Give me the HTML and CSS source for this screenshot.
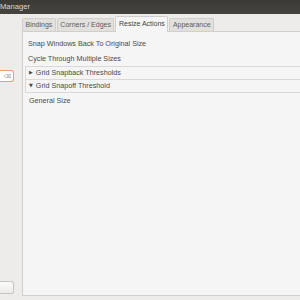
FILE: index.html
```html
<!DOCTYPE html>
<html lang="en">
  <head>
    <meta charset="UTF-8" />
    <title>Manager</title>
    <link rel="stylesheet" href="styles.css">
  </head>
  <body>
    <div class="titlebar">Manager</div>
    <div class="main">
      <div class="sidebar">
        <div class="search">
          <span class="clear-icon">&#x232B;</span>
        </div>
        <div class="side-button"></div>
      </div>
      <div class="notebook">
        <div class="tabs">
          <div class="tab">Bindings</div>
          <div class="tab">Corners / Edges</div>
          <div class="tab active">Resize Actions</div>
          <div class="tab">Appearance</div>
        </div>
        <div class="page">
          <div class="row">Snap Windows Back To Original Size</div>
          <div class="row">Cycle Through Multiple Sizes</div>
          <div class="expander">
            <span class="arrow">&#9654;</span>Grid Snapback Thresholds
          </div>
          <div class="expander open">
            <span class="arrow">&#9660;</span>Grid Snapoff Threshold
          </div>
          <div class="row sub">General Size</div>
        </div>
      </div>
    </div>
  </body>
</html>
```

FILE: styles.css
```css
body {
  margin: 0;
  width: 300px;
  height: 300px;
  overflow: hidden;
  background-color: #edecea;
  font-family: "Liberation Sans", Arial, sans-serif;
  color: #4a4a48;
}
.titlebar {
  height: 14px;
  line-height: 13px;
  background: linear-gradient(#3a3935, #46443f);
  color: #dcd9d2;
  font-size: 7.6px;
}
.main {
  display: flex;
  height: 286px;
}
.sidebar {
  width: 22px;
  display: flex;
  flex-direction: column;
  justify-content: space-between;
  padding-top: 56px;
  padding-bottom: 6px;
  box-sizing: border-box;
}
.search {
  width: 15px;
  height: 12px;
  margin-left: -1px;
  box-sizing: border-box;
  border: 1px solid #f09a6e;
  border-left: none;
  border-radius: 0 3px 3px 0;
  background-color: #fff;
  display: flex;
  align-items: center;
  justify-content: flex-end;
  padding-right: 2px;
}
.clear-icon {
  font-family: "DejaVu Sans", sans-serif;
  font-size: 5px;
  color: #777;
}
.side-button {
  width: 15px;
  height: 13px;
  margin-left: -1px;
  box-sizing: border-box;
  border: 1px solid #c8c5c0;
  border-left: none;
  border-radius: 0 3px 3px 0;
  background: linear-gradient(#fbfbfa, #ecebe9);
}
.notebook {
  flex: 1;
  display: flex;
  flex-direction: column;
  padding-top: 1px;
  padding-bottom: 4px;
}
.tabs {
  display: flex;
  align-items: flex-end;
  height: 16px;
}
.tab {
  height: 12px;
  line-height: 12px;
  padding: 0 2.5px;
  margin-right: 1px;
  font-size: 7px;
  color: #5c5b58;
  background-color: #e2e0dd;
  border: 1px solid #d2cfcb;
  border-bottom: none;
  border-radius: 2px 2px 0 0;
}
.tab.active {
  height: 15px;
  line-height: 14px;
  background-color: #f5f5f5;
  color: #3f3f3d;
  position: relative;
  top: 1px;
}
.page {
  flex: 1;
  background-color: #f5f5f5;
  border: 1px solid #d2cfcb;
  border-right: none;
  padding: 4px 0 0 2px;
  font-size: 7.2px;
}
.row {
  height: 15px;
  line-height: 15px;
  padding-left: 3px;
}
.expander {
  height: 12px;
  line-height: 12px;
  border: 1px solid #dcd9d5;
  border-right: none;
  padding-left: 3px;
}
.expander.open {
  border-top: none;
}
.arrow {
  font-family: "DejaVu Sans", sans-serif;
  font-size: 5px;
  margin-right: 3px;
  color: #4a4a48;
  position: relative;
  top: -1px;
}
.row.sub {
  height: 16px;
  line-height: 16px;
  padding-left: 4px;
}
```
